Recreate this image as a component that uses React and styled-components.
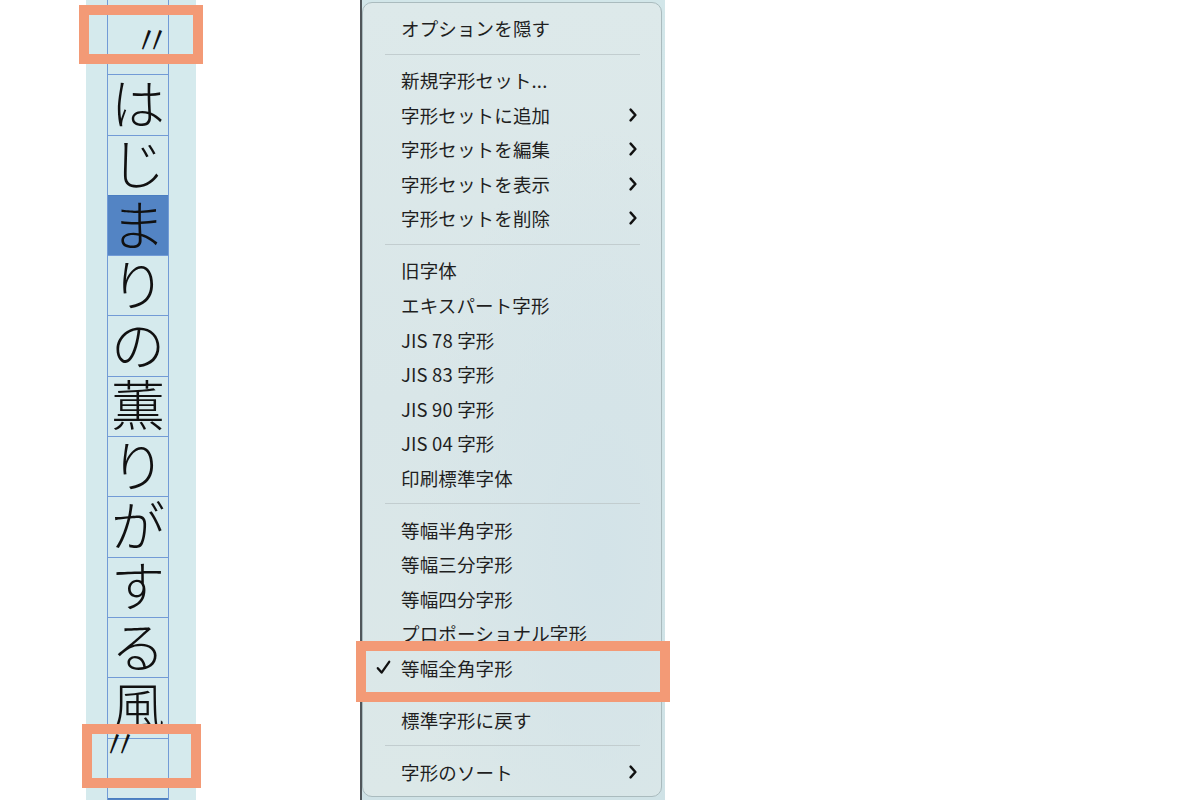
import React from "react";
import styled, { createGlobalStyle } from "styled-components";

const Global = createGlobalStyle`
  html, body { margin: 0; padding: 0; background: #ffffff; }
  body { width: 1200px; height: 800px; overflow: hidden; }
  #root { width: 1200px; height: 800px; }
`;

const Page = styled.div`
  position: relative;
  width: 1200px;
  height: 800px;
  display: flex;
  align-items: stretch;
  padding-left: 86px;
  box-sizing: border-box;
  background: #ffffff;
  overflow: hidden;
`;

/* ---------- vertical text column ---------- */
const TextColumn = styled.div`
  width: 110px;
  flex: none;
  background: #d5eaed;
  display: flex;
  padding-left: 21px;
  box-sizing: border-box;
`;

const Grid = styled.div`
  width: 60px;
  border-left: 1px solid #729bd6;
  border-right: 1px solid #729bd6;
  display: flex;
  flex-direction: column;
  padding-top: 14px;
`;

const Cell = styled.div`
  flex: none;
  height: 60.3px;
  box-sizing: border-box;
  border-top: 1px solid ${(p) => (p.$hl ? "#4a7dc0" : "#729bd6")};
  background: ${(p) => (p.$hl ? "#5384c4" : "transparent")};
  display: flex;
  align-items: center;
  justify-content: center;
`;

const Glyph = styled.span`
  font-family: "Noto Sans CJK JP", sans-serif;
  font-weight: 300;
  font-size: ${(p) => (p.$small ? 40 : 54)}px;
  line-height: ${(p) => (p.$small ? 24 : 54)}px;
  height: ${(p) => (p.$small ? 24 : 54)}px;
  color: #111;
  white-space: nowrap;
  transform: translate(${(p) => p.$dx || 0}px, ${(p) => p.$dy || 0}px);
`;

/* ---------- menu ---------- */
const Backdrop = styled.div`
  margin-left: 164px;
  width: 305px;
  flex: none;
  display: flex;
  background: linear-gradient(#d2e6e9, #cfe2e6);
  border-left: 2px solid #50565a;
  box-sizing: border-box;
  padding: 2px 3px 3px 0;
`;

const Menu = styled.div`
  width: 300px;
  box-sizing: border-box;
  border: 1px solid #aabbbe;
  border-radius: 10px;
  background:
    radial-gradient(ellipse at 80% 70%, #d3e3e8 0%, rgba(211,227,232,0) 55%),
    linear-gradient(180deg, #dde9ea 0%, #d9e6e8 50%, #dce8e8 100%);
  padding: 8px 0 6px;
  display: flex;
  flex-direction: column;
  font-family: "Noto Sans CJK JP", sans-serif;
  color: #1f1f1f;
`;

const Item = styled.div`
  height: 34.57px;
  flex: none;
  display: flex;
  align-items: center;
  padding-left: 13px;
  padding-right: 24px;
  font-size: 18.5px;
  letter-spacing: 0.15px;
`;

const CheckSlot = styled.span`
  width: 25px;
  flex: none;
  display: flex;
  align-items: center;
`;

const Label = styled.span`
  flex: 1;
  white-space: nowrap;
`;

const Separator = styled.div`
  flex: none;
  height: 1px;
  background: #c2cdcf;
  margin: 8.2px 21px 8.2px 22px;
`;

const Annotation = styled.div`
  position: absolute;
  box-sizing: border-box;
  border: 10px solid #f39a76;
  left: ${(p) => p.$x}px;
  top: ${(p) => p.$y}px;
  width: ${(p) => p.$w}px;
  height: ${(p) => p.$h}px;
  pointer-events: none;
`;

const Chevron = () => (
  <svg width="8" height="14" viewBox="0 0 8 14" aria-hidden="true">
    <path d="M1.6 1.6 L6.4 7 L1.6 12.4" fill="none" stroke="#111" strokeWidth="2.4" strokeLinecap="round" strokeLinejoin="round" />
  </svg>
);

const Check = () => (
  <svg width="15" height="15" viewBox="0 0 15 15" aria-hidden="true">
    <path d="M1.8 8.2 L5.6 12.6 L13.2 1.8" fill="none" stroke="#111" strokeWidth="2.3" strokeLinecap="round" strokeLinejoin="round" />
  </svg>
);

const cells = [
  { c: "〃", small: true, dx: 14, dy: -7 },
  { c: "は" },
  { c: "じ" },
  { c: "ま", hl: true },
  { c: "り" },
  { c: "の" },
  { c: "薫" },
  { c: "り" },
  { c: "が" },
  { c: "す" },
  { c: "る" },
  { c: "風" },
  { c: "〃", small: true, dx: -18, dy: -26 },
  { c: "", hl: true },
];

const menu = [
  { t: "オプションを隠す" },
  "sep",
  { t: "新規字形セット..." },
  { t: "字形セットに追加", sub: true },
  { t: "字形セットを編集", sub: true },
  { t: "字形セットを表示", sub: true },
  { t: "字形セットを削除", sub: true },
  "sep",
  { t: "旧字体" },
  { t: "エキスパート字形" },
  { t: "JIS 78 字形" },
  { t: "JIS 83 字形" },
  { t: "JIS 90 字形" },
  { t: "JIS 04 字形" },
  { t: "印刷標準字体" },
  "sep",
  { t: "等幅半角字形" },
  { t: "等幅三分字形" },
  { t: "等幅四分字形" },
  { t: "プロポーショナル字形" },
  { t: "等幅全角字形", checked: true },
  "sep",
  { t: "標準字形に戻す" },
  "sep",
  { t: "字形のソート", sub: true },
];

export default function App() {
  return (
    <>
      <Global />
      <Page>
        <TextColumn>
          <Grid>
            {cells.map((cell, i) => (
              <Cell key={i} $hl={cell.hl}>
                {cell.c && (
                  <Glyph $small={cell.small} $dx={cell.dx ?? 0} $dy={cell.dy ?? -3}>
                    {cell.c}
                  </Glyph>
                )}
              </Cell>
            ))}
          </Grid>
        </TextColumn>
        <Backdrop>
          <Menu>
            {menu.map((m, i) =>
              m === "sep" ? (
                <Separator key={i} />
              ) : (
                <Item key={i}>
                  <CheckSlot>{m.checked && <Check />}</CheckSlot>
                  <Label>{m.t}</Label>
                  {m.sub && <Chevron />}
                </Item>
              )
            )}
          </Menu>
        </Backdrop>
        <Annotation $x={79} $y={5} $w={124} $h={59} />
        <Annotation $x={82} $y={724} $w={119} $h={64} />
        <Annotation $x={356} $y={641} $w={314} $h={61} />
      </Page>
    </>
  );
}
